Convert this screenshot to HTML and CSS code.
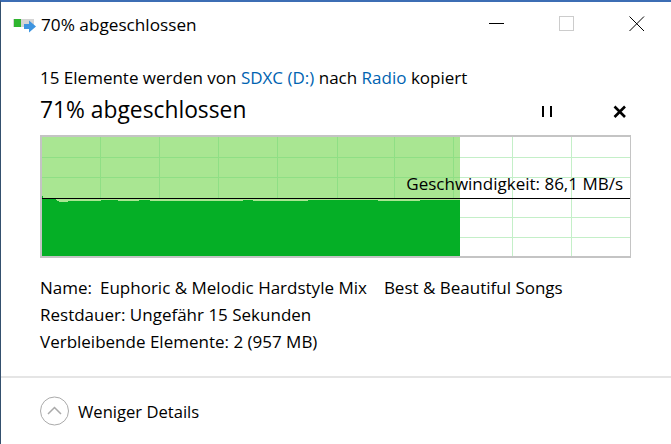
FILE: index.html
```html
<!DOCTYPE html>
<html lang="de">
<head>
    <meta charset="UTF-8">
    <title>70% abgeschlossen</title>
    <link rel="stylesheet" href="styles.css">
</head>
<body>
    <div class="window">
        <div class="titlebar">
            <svg class="title-icon" width="24" height="14" viewBox="0 0 24 14">
                <rect x="0" y="0" width="21" height="8" fill="#d4d4d4"/>
                <rect x="1" y="0" width="7" height="8" fill="#2fb52f"/>
                <path d="M11 5 H16 V1.5 L23 7.5 L16 13.5 V10 H11 Z" fill="#3d94e0"/>
            </svg>
            <span class="title-text">70% abgeschlossen</span>
            <div class="window-buttons">
                <svg width="16" height="16" viewBox="0 0 16 16"><path d="M0 7.5 H15" stroke="#000" fill="none"/></svg>
                <svg width="16" height="16" viewBox="0 0 16 16"><rect x="0.5" y="0.5" width="14" height="14" stroke="#ccc" fill="none"/></svg>
                <svg width="16" height="16" viewBox="0 0 16 16"><path d="M0.5 0.5 L15 15 M15 0.5 L0.5 15" stroke="#000" fill="none"/></svg>
            </div>
        </div>

        <div class="content">
            <div class="copy-line">15 Elemente werden von <span class="link">SDXC (D:)</span> nach <span class="link">Radio</span> kopiert</div>
            <div class="status-row">
                <span class="status-text">71% abgeschlossen</span>
                <div class="status-buttons">
                    <svg width="12" height="12" viewBox="0 0 12 12"><path d="M1 0 H3 V11 H1 Z M9 0 H11 V11 H9 Z" fill="#000"/></svg>
                    <svg width="14" height="14" viewBox="0 0 14 14"><path d="M1.5 1.5 L12 12 M12 1.5 L1.5 12" stroke="#000" stroke-width="2.6" fill="none"/></svg>
                </div>
            </div>

            <div class="chart">
                <svg width="591" height="123" viewBox="40 136 591 123" shape-rendering="crispEdges">
                    <rect x="460" y="138" width="170" height="119" fill="#fff"/>
                    <rect x="42" y="138" width="418" height="119" fill="#a9e692"/>
                    <g stroke="#c4efc8" stroke-width="1">
                        <path d="M512.5 138 V257 M571.5 138 V257"/>
                        <path d="M460 158.5 H630 M460 178.5 H630 M460 218.5 H630 M460 238.5 H630"/>
                    </g>
                    <g stroke="#8fdf85" stroke-width="1">
                        <path d="M100.5 138 V200 M159.5 138 V200 M218.5 138 V200 M277.5 138 V200 M337.5 138 V200 M394.5 138 V200 M453.5 138 V200"/>
                        <path d="M42 158.5 H460 M42 178.5 H460"/>
                    </g>
                    <path d="M42 197 H43 V200 H55 L58 202 L60 203 L66 203 L70 202 L100 202 L102 201 L117 201 L118 202 L138 202 L140 201 L160 202 L240 202 L245 201 L260 202 L300 202 L316 201 L340 201 L415 202 L425 201 L445 201 L460 201 V257 H42 Z" fill="#05af26"/>
                    <rect x="42" y="199" width="588" height="1" fill="#000"/>
                </svg>
                <span class="speed">Geschwindigkeit: 86,1 MB/s</span>
            </div>

            <div class="details">
                <div>Name:<span class="name-title">Euphoric &amp; Melodic Hardstyle Mix</span><span class="name-album">Best &amp; Beautiful Songs</span></div>
                <div>Restdauer:&nbsp;Ungefähr 15 Sekunden</div>
                <div>Verbleibende Elemente:&nbsp;2 (957 MB)</div>
            </div>
        </div>

        <div class="footer">
            <svg width="29" height="30" viewBox="0 0 29 30">
                <circle cx="14.5" cy="15" r="14" stroke="#aaa" fill="none"/>
                <path d="M8 18 L14.5 11.5 L21 18" stroke="#aaa" stroke-width="1.5" fill="none"/>
            </svg>
            <span>Weniger Details</span>
        </div>
    </div>
</body>
</html>
```

FILE: styles.css
```css
html, body {
    margin: 0;
    padding: 0;
    background: #fff;
    overflow: hidden;
}

.window {
    width: 671px;
    height: 444px;
    box-sizing: border-box;
    border-top: 2px solid #3c6db4;
    border-left: 1px solid #34506e;
    font-family: "Open Sans", "Noto Sans", sans-serif;
    font-size: 17px;
    color: #000;
    display: flex;
    flex-direction: column;
}

.titlebar {
    height: 44px;
    display: flex;
    align-items: center;
    padding-left: 12px;
}

.title-icon {
    margin-top: 4px;
    margin-right: 4px;
}

.title-text {
    font-size: 17.2px;
}

.window-buttons {
    margin-left: auto;
    display: flex;
    gap: 54px;
    padding-right: 26px;
}

.content {
    padding: 20px 39px 0;
    flex: 1;
}

.copy-line {
    line-height: 24px;
}

.link {
    color: #0063b1;
}

.status-row {
    display: flex;
    align-items: center;
    height: 38px;
}

.status-text {
    font-size: 22.8px;
}

.status-buttons {
    margin-left: auto;
    margin-top: 6px;
    display: flex;
    align-items: center;
    gap: 60px;
    padding-right: 5px;
}

.chart {
    position: relative;
    width: 591px;
    height: 123px;
    margin-top: 7px;
    background: #c4c4c4;
}

.chart svg {
    display: block;
}

.speed {
    position: absolute;
    right: 8px;
    top: 37px;
    line-height: 24px;
}

.details {
    margin-top: 16px;
    line-height: 27px;
}

.name-title {
    margin-left: 8px;
}

.name-album {
    margin-left: 17px;
}

.footer {
    height: 66px;
    border-top: 2px solid #e5e5e5;
    display: flex;
    align-items: center;
    padding-left: 39px;
    gap: 9px;
    font-size: 16.6px;
}
```
